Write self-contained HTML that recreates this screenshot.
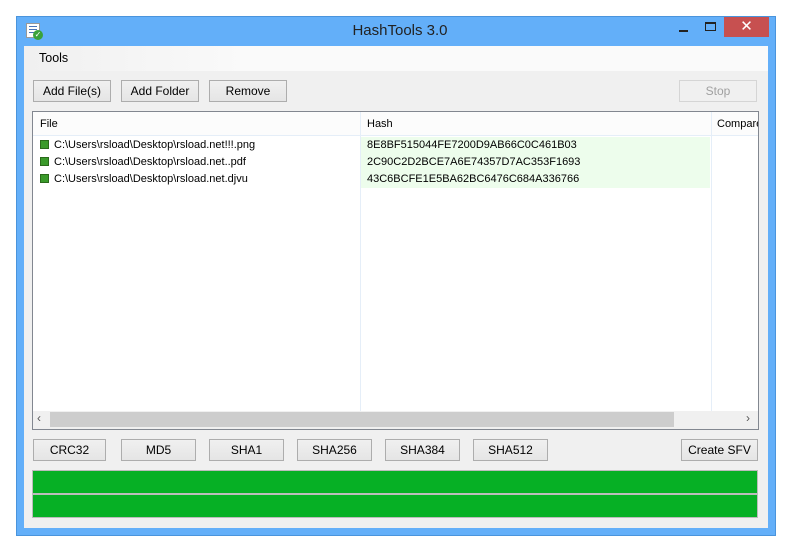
<!DOCTYPE html>
<html><head><style>
*{margin:0;padding:0;box-sizing:border-box}
body{width:800px;height:551px;background:#fff;position:relative;font-family:"Liberation Sans",sans-serif;font-size:12px;color:#000;overflow:hidden}
.a{position:absolute}
.btn{position:absolute;height:22px;border:1px solid #adadad;background:linear-gradient(#f0f0f0,#e5e5e5);text-align:center;line-height:20px;font-size:12px}
.row{position:absolute;left:7px;height:17px;line-height:17px;font-size:11px}
.sq{display:inline-block;width:9px;height:9px;background:#3a9a2a;border:1px solid #2a6a1a;vertical-align:-1px;margin-right:5px}
.h{position:absolute;left:334px;height:17px;line-height:17px;font-size:11px}
</style></head><body>
<div class="a" style="left:16px;top:16px;width:760px;height:520px;background:#63aff9;border:1px solid #4a94dc"></div>
<div class="a" style="left:26px;top:23px;width:14px;height:15px;background:#fff;border:1px solid #999"></div>
<div class="a" style="left:29px;top:26px;width:8px;height:8px;background:repeating-linear-gradient(#4a74b8 0 1px,transparent 1px 3px)"></div>
<div class="a" style="left:33px;top:30px;width:10px;height:10px;border-radius:50%;background:#3aa23a;color:#fff;font-size:8px;line-height:10px;text-align:center">✓</div>
<div class="a" style="left:0;top:22px;width:800px;text-align:center;font-size:15px;color:#222">HashTools 3.0</div>
<div class="a" style="left:679px;top:30px;width:9px;height:2px;background:#222"></div>
<div class="a" style="left:705px;top:22px;width:11px;height:9px;border:1px solid #222;border-top-width:2px"></div>
<div class="a" style="left:724px;top:17px;width:45px;height:20px;background:#c75050;color:#fff;text-align:center;font-size:15px;line-height:20px">✕</div>
<div class="a" style="left:24px;top:46px;width:744px;height:482px;background:#f0f0f0"></div>
<div class="a" style="left:24px;top:46px;width:744px;height:25px;background:linear-gradient(90deg,#f0f0f0,#fafafa 30%,#fafafa)"></div>
<div class="a" style="left:39px;top:51px;font-size:12.5px">Tools</div>
<div class="btn" style="left:33px;top:80px;width:78px">Add File(s)</div>
<div class="btn" style="left:121px;top:80px;width:78px">Add Folder</div>
<div class="btn" style="left:209px;top:80px;width:78px">Remove</div>
<div class="btn" style="left:679px;top:80px;width:78px;color:#a0a0a0;background:#f0f0f0;border-color:#d5d5d5">Stop</div>
<div class="a" style="left:32px;top:111px;width:727px;height:319px;background:#fff;border:1px solid #828790;overflow:hidden">
<div class="a" style="left:0;top:0;width:725px;height:24px;background:#fcfcfc;border-bottom:1px solid #e5eef8"></div>
<div class="a" style="left:327px;top:0;width:1px;height:299px;background:#e5eef8"></div>
<div class="a" style="left:678px;top:0;width:1px;height:299px;background:#e5eef8"></div>
<div class="a" style="left:7px;top:6px;font-size:11px">File</div>
<div class="a" style="left:334px;top:6px;font-size:11px">Hash</div>
<div class="a" style="left:684px;top:6px;font-size:11px;white-space:nowrap">Compare</div>
<div class="a" style="left:328px;top:25px;width:349px;height:51px;background:#edfdec"></div>
<div class="row" style="top:25px"><span class="sq"></span>C:\Users\rsload\Desktop\rsload.net!!!.png</div>
<div class="row" style="top:42px"><span class="sq"></span>C:\Users\rsload\Desktop\rsload.net..pdf</div>
<div class="row" style="top:59px"><span class="sq"></span>C:\Users\rsload\Desktop\rsload.net.djvu</div>
<div class="h" style="top:25px">8E8BF515044FE7200D9AB66C0C461B03</div>
<div class="h" style="top:42px">2C90C2D2BCE7A6E74357D7AC353F1693</div>
<div class="h" style="top:59px">43C6BCFE1E5BA62BC6476C684A336766</div>
<div class="a" style="left:0;top:299px;width:725px;height:18px;background:#f0f0f0"></div>
<div class="a" style="left:17px;top:300px;width:624px;height:15px;background:#cdcdcd"></div>
<div class="a" style="left:4px;top:299px;font-size:12px;color:#555">‹</div>
<div class="a" style="left:713px;top:299px;font-size:12px;color:#555">›</div>
</div>
<div class="btn" style="left:33px;top:439px;width:73px">CRC32</div>
<div class="btn" style="left:121px;top:439px;width:75px">MD5</div>
<div class="btn" style="left:209px;top:439px;width:75px">SHA1</div>
<div class="btn" style="left:297px;top:439px;width:75px">SHA256</div>
<div class="btn" style="left:385px;top:439px;width:75px">SHA384</div>
<div class="btn" style="left:473px;top:439px;width:75px">SHA512</div>
<div class="btn" style="left:681px;top:439px;width:77px">Create SFV</div>
<div class="a" style="left:32px;top:470px;width:726px;height:24px;background:#06b025;border:1px solid #bcbcbc"></div>
<div class="a" style="left:32px;top:494px;width:726px;height:24px;background:#06b025;border:1px solid #bcbcbc"></div>
</body></html>
